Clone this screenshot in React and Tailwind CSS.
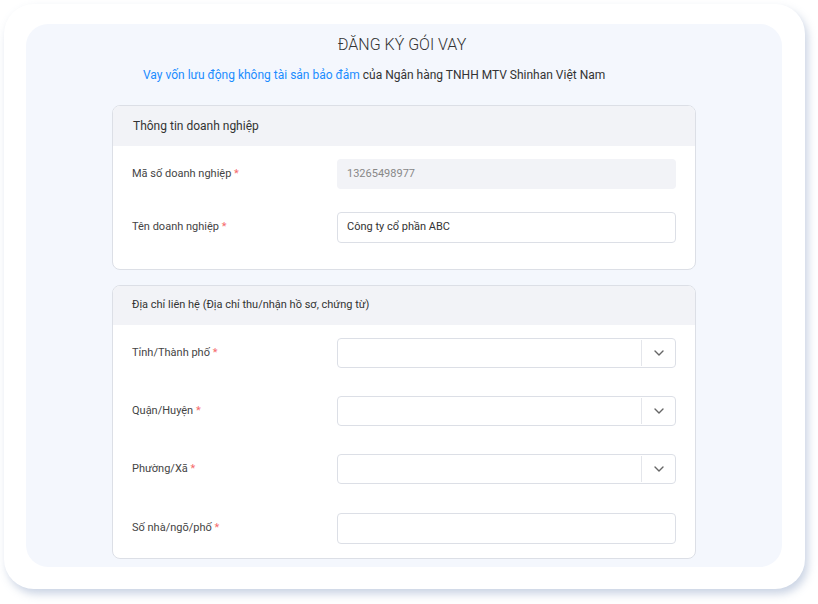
import React from "react";

const font = { fontFamily: "Roboto, 'Noto Sans', sans-serif" };

function Label({ children }) {
  return (
    <div className="w-[205px] shrink-0 text-[11px] text-[#444]">
      {children} <span className="text-[#f56c6c]">*</span>
    </div>
  );
}

function Chevron() {
  return (
    <svg width="10" height="6" viewBox="0 0 10 6" fill="none">
      <path d="M1 1l4 4 4-4" stroke="#666" strokeWidth="1.4" strokeLinecap="round" strokeLinejoin="round" />
    </svg>
  );
}

function SelectBox() {
  return (
    <div className="flex h-[30px] flex-1 items-center rounded-[4px] border border-[#dcdfe6] bg-white">
      <div className="flex-1" />
      <div className="h-[26px] w-px bg-[#e4e6eb]" />
      <div className="flex w-[33px] items-center justify-center">
        <Chevron />
      </div>
    </div>
  );
}

function Row({ label, children, className = "" }) {
  return (
    <div className={"flex items-center " + className}>
      <Label>{label}</Label>
      {children}
    </div>
  );
}

export default function App() {
  return (
    <div className="h-[604px] w-[818px] bg-white pl-[4px] pt-[4px]" style={font}>
      <div className="h-[585px] w-[801px] rounded-[30px] bg-white pl-[22px] pt-[20px] shadow-[3px_5px_9px_rgba(140,160,195,0.45)]">
        <div className="h-[543px] w-[756px] overflow-hidden rounded-[22px] bg-[#f4f7fd] pt-[11px]">
          <div className="h-5 pr-[4px] text-center text-[16px] font-light leading-5 text-[#333]">ĐĂNG KÝ GÓI VAY</div>
          <div className="mt-[12px] pl-[117px] text-[12px] leading-4 text-[#333]">
            <span className="text-[#1a8cff]">Vay vốn lưu động không tài sản bảo đảm</span> của Ngân hàng TNHH MTV Shinhan Việt Nam
          </div>

          <div className="mx-[86px] mt-[22px] overflow-hidden rounded-[8px] border border-[#dcdfe6] bg-white">
            <div className="flex h-[40px] items-center bg-[#f2f3f7] pl-[20px] text-[12px] text-[#333]">
              Thông tin doanh nghiệp
            </div>
            <div className="px-[19px] pb-[26px] pt-[13px]">
              <Row label="Mã số doanh nghiệp">
                <div className="flex h-[30px] flex-1 items-center rounded-[4px] bg-[#f2f3f7] pl-[10px] text-[11px] text-[#888]">
                  13265498977
                </div>
              </Row>
              <Row label="Tên doanh nghiệp" className="mt-[23px]">
                <div className="flex h-[31px] flex-1 items-center rounded-[4px] border border-[#dcdfe6] bg-white pl-[9px] text-[11px] text-[#333]">
                  Công ty cổ phần ABC
                </div>
              </Row>
            </div>
          </div>

          <div className="mx-[86px] mt-[15px] overflow-hidden rounded-[8px] border border-[#dcdfe6] bg-white">
            <div className="flex h-[39px] items-center bg-[#f2f3f7] pl-[19px] text-[11px] text-[#333]">
              Địa chỉ liên hệ (Địa chỉ thu/nhận hồ sơ, chứng từ)
            </div>
            <div className="px-[19px] pb-[14px] pt-[13px]">
              <Row label="Tỉnh/Thành phố">
                <SelectBox />
              </Row>
              <Row label="Quận/Huyện" className="mt-[28px]">
                <SelectBox />
              </Row>
              <Row label="Phường/Xã" className="mt-[28px]">
                <SelectBox />
              </Row>
              <Row label="Số nhà/ngõ/phố" className="mt-[29px]">
                <div className="h-[31px] flex-1 rounded-[4px] border border-[#dcdfe6] bg-white" />
              </Row>
            </div>
          </div>
        </div>
      </div>
    </div>
  );
}
